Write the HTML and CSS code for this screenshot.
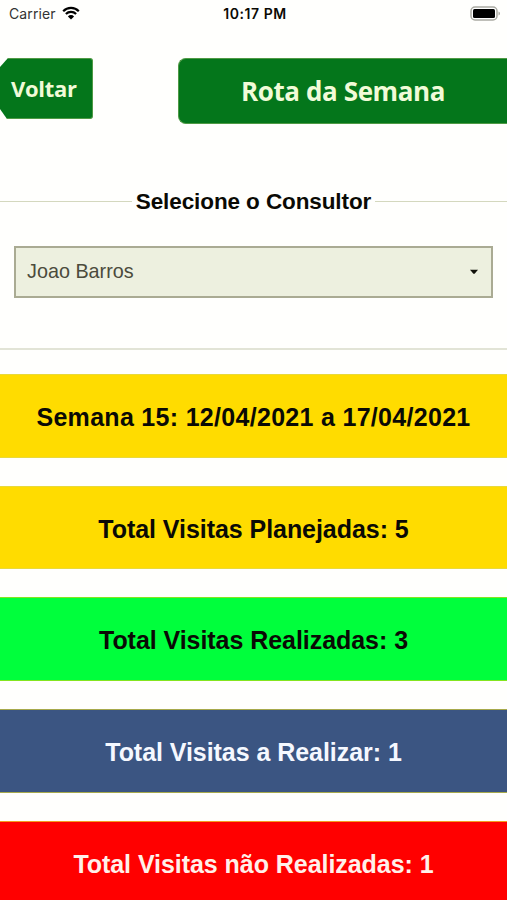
FILE: index.html
```
<!DOCTYPE html>
<html lang="pt-BR">
<head>
  <meta charset="UTF-8" />
  <meta name="viewport" content="width=device-width, initial-scale=1.0"/>
  <title>Rota da Semana</title>
  <link rel="stylesheet" href="styles.css">
</head>
<body>

  <div class="status-bar">
    <div class="carrier">
      <span>Carrier</span>
      <svg class="wifi" width="18" height="14" viewBox="0 0 18 14">
        <path d="M1.2 5.2a11 11 0 0 1 15.6 0M3.9 8a7.2 7.2 0 0 1 10.2 0" fill="none" stroke="#000" stroke-width="2.2"/>
        <path d="M9 13.6L5.9 10.4a4.4 4.4 0 0 1 6.2 0z" fill="#000"/>
      </svg>
    </div>
    <span class="time">10:17 PM</span>
    <div class="battery">
      <svg width="31" height="15" viewBox="0 0 31 15">
        <rect x="1" y="1" width="26" height="13" rx="4" fill="#fff" stroke="#aaaaa2" stroke-width="1.5"/>
        <rect x="3" y="3" width="22" height="9" rx="1.5" fill="#000"/>
        <path d="M28.5 5.5v4c2-.8 2-3.2 0-4z" fill="#aaaaa2"/>
      </svg>
    </div>
  </div>

  <header class="header">
    <button class="back-btn">Voltar</button>
    <h1 class="title">Rota da Semana</h1>
  </header>

  <section class="consultant">
    <h2 class="legend"><span>Selecione o Consultor</span></h2>
    <div class="select-box">
      <span>Joao Barros</span>
      <svg width="10" height="6" viewBox="0 0 10 6"><path d="M1 .8h8L5.6 4.8H4.4z" fill="#11110a"/></svg>
    </div>
  </section>

  <main class="totals">
    <div class="total week">Semana 15: 12/04/2021 a 17/04/2021</div>
    <div class="total planned">Total Visitas Planejadas: 5</div>
    <div class="total done">Total Visitas Realizadas: 3</div>
    <div class="total todo">Total Visitas a Realizar: 1</div>
    <div class="total missed">Total Visitas não Realizadas: 1</div>
  </main>

</body>
</html>
```

FILE: styles.css
```
* {
  box-sizing: border-box;
}

body {
  font-family: "Liberation Sans", Arial, sans-serif;
  margin: 0;
  height: 900px;
  overflow: hidden;
  background-color: #fffffd;
  color: #0a0a05;
}

.status-bar {
  display: grid;
  grid-template-columns: 1fr auto 1fr;
  align-items: center;
  height: 27px;
  padding: 0 6px 0 9px;
  font-family: Inter, sans-serif;
  font-size: 14px;
}

.carrier {
  display: flex;
  align-items: center;
  gap: 6px;
  color: #333;
  letter-spacing: 0.1px;
}

.wifi {
  margin-bottom: 2px;
}

.time {
  font-weight: 600;
  letter-spacing: 0.55px;
}

.battery {
  display: flex;
  justify-content: flex-end;
}

.header {
  display: flex;
  justify-content: space-between;
  align-items: flex-start;
  height: 97px;
  padding-top: 31px;
}

.back-btn {
  width: 93px;
  height: 61px;
  padding: 0 0 1px 11px;
  border: 1px solid #4f9a45;
  border-left: none;
  border-radius: 0 3px 3px 0;
  background-color: #04761b;
  clip-path: polygon(8px 0, 100% 0, 100% 100%, 7px 100%, 0 51px, 0 9px);
  color: #f1fbd8;
  font-family: "Open Sans", "Noto Sans", sans-serif;
  font-size: 22px;
  font-weight: bold;
  letter-spacing: -0.3px;
  text-align: left;
}

.title {
  width: 329px;
  height: 66px;
  margin: 0;
  padding-left: 62px;
  border: 1px solid #4f9a45;
  border-right: none;
  border-radius: 8px 0 0 8px;
  background-color: #04761b;
  color: #f1fbd8;
  font-family: "Open Sans", "Noto Sans", sans-serif;
  font-size: 26px;
  letter-spacing: -0.4px;
  line-height: 64px;
  white-space: nowrap;
}

.consultant {
  height: 226px;
  padding-top: 64px;
  border-bottom: 2px solid #e2e4d6;
}

.legend {
  display: flex;
  align-items: center;
  gap: 4px;
  margin: 0;
  font-size: 22.5px;
  letter-spacing: -0.1px;
  line-height: 28px;
  white-space: nowrap;
}

.legend::before,
.legend::after {
  content: "";
  flex: 1;
  height: 1px;
  margin-bottom: 2px;
  background-color: #d4d8be;
}

.select-box {
  display: flex;
  justify-content: space-between;
  align-items: center;
  height: 52px;
  margin: 29.5px 14px 0;
  padding: 0 12px 0 11px;
  border: 2px solid #aaab93;
  background-color: #edf0df;
  color: #4b4b3c;
  font-size: 19.8px;
}

.totals {
  display: flex;
  flex-direction: column;
  gap: 28px;
  padding-top: 24px;
}

.total {
  flex: none;
  height: 83.7px;
  border: solid #e8d93c;
  border-width: 1px 0;
  font-size: 25px;
  font-weight: bold;
  letter-spacing: -0.05px;
  line-height: 85px;
  text-align: center;
  white-space: nowrap;
}

.week,
.planned {
  background-color: #ffdc00;
}

.week {
  letter-spacing: 0.3px;
}

.done {
  background-color: #00ff3c;
  border-color: #84e51f;
}

.todo {
  background-color: #3b5582;
  border-color: #a7a94c;
  color: #f5f8ff;
}

.missed {
  background-color: #ff0000;
  border-color: #f59a1f;
  color: #fff0ea;
}
```
